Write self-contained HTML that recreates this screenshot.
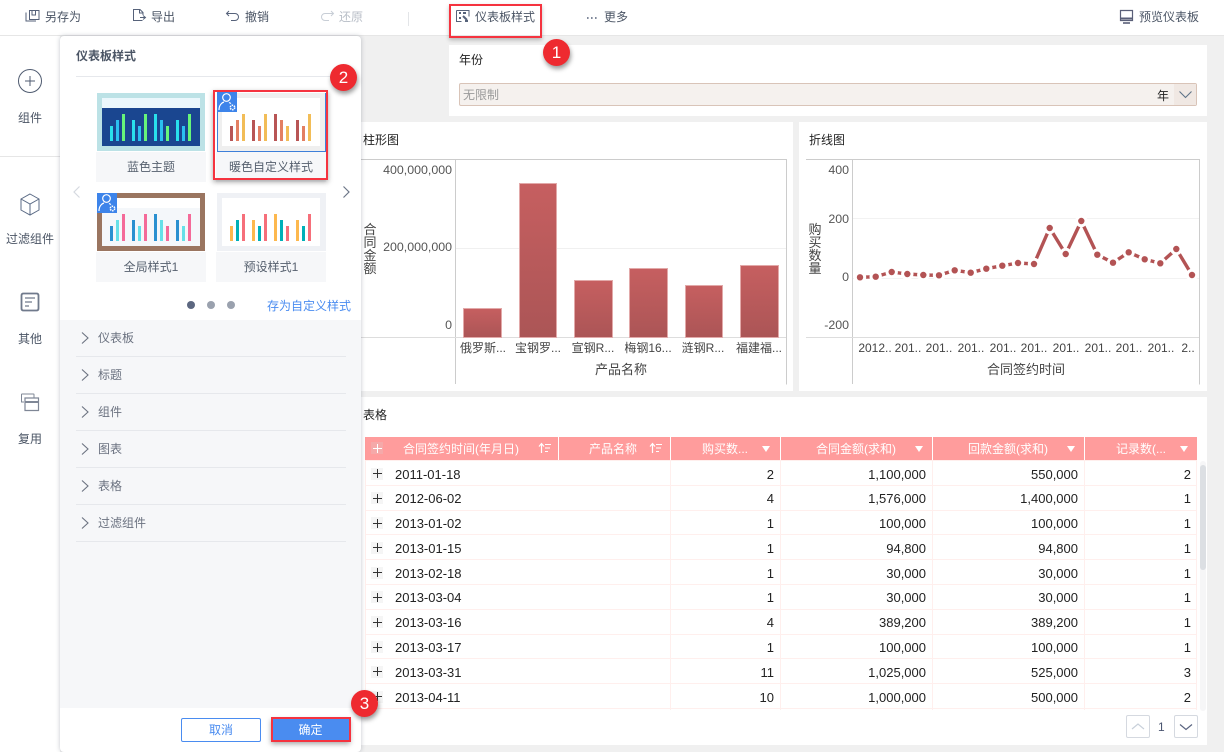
<!DOCTYPE html>
<html lang="zh"><head><meta charset="utf-8"><title>仪表板样式</title>
<style>
*{box-sizing:border-box;margin:0;padding:0}
html,body{width:1224px;height:752px;overflow:hidden;background:#f0f0f0}
body{position:relative;font:12px/16px "Liberation Sans","Noto Sans CJK SC",sans-serif;color:#333}
.a{position:absolute}
.t{position:absolute;white-space:nowrap}
#top{left:0;top:0;width:1224px;height:36px;background:#fff;border-bottom:1px solid #e6e6e6}
#top .t{top:9px;color:#4b5565}
#rail{left:0;top:36px;width:60px;height:716px;background:#fff}
.rl{position:absolute;left:0;width:60px;text-align:center;color:#4b5565}
.pn{background:#fff}
#panel{left:60px;top:36px;width:301px;height:716px;background:#fff;border-radius:4px;box-shadow:0 0 5px rgba(60,70,90,.3);z-index:5;overflow:hidden}
.card{position:absolute;width:110px;height:30px;background:#f6f7f9;text-align:center;line-height:30px;color:#56606e}
.sec{position:absolute;left:16px;width:270px;height:37px;border-bottom:1px solid #e6e8ec;color:#6b7280;padding:10px 0 0 22px}
.sec svg{position:absolute;left:5px;top:12px}
#hdr{left:365px;top:437px;width:832px;height:23px;background:#ff9c9c;color:#fff}
#hdr i{position:absolute;top:0;width:1px;height:23px;background:#fff}
#hdr .t{top:4px}
.tri{position:absolute;top:9px;width:0;height:0;border-left:4.5px solid transparent;border-right:4.5px solid transparent;border-top:6px solid #fff}
#rows{left:365px;top:461px;width:832px;height:249px;overflow:hidden;font-size:13px;color:#222}
.r{position:relative;height:24.8px;border-bottom:1px solid #ffefed}
.r b{font-weight:400;position:absolute;top:5.500px;white-space:nowrap}
.r u{position:absolute;left:6px;top:6.500px;width:12px;height:12px;text-decoration:none;background:linear-gradient(#333,#333) center/9px 1px no-repeat,linear-gradient(#333,#333) center/1px 9px no-repeat,#f5f5f5}
.c1{left:30px}.c3{right:423px}.c4{right:271px}.c5{right:119px}.c6{right:6px}
.cl{position:absolute;top:461px;width:1px;height:249px;background:#ffefed}
.badge{position:absolute;width:20px;height:20px;background:#3d84ea}
.num{position:absolute;width:27px;height:27px;border-radius:50%;background:#ee2a30;color:#fff;font-size:17px;line-height:27px;text-align:center;box-shadow:1px 3px 5px rgba(0,0,0,.4);z-index:9}
.red{position:absolute;border:2px solid #f5333f;z-index:8}
svg{display:block}
svg text{font-family:"Liberation Sans","Noto Sans CJK SC",sans-serif}
</style></head><body>

<div id="top" class="a">
<svg class="a" style="left:0;top:0" width="640" height="36" fill="none" stroke="#56627a" stroke-width="1">
<path d="M29.500 10.500h9.500v9h-9.500zM26 12.500v8.500h10M32 10.500v4.500h3.500v-4.500"/>
<path d="M142.500 20.500h-9v-11h6.500l3 3v2.500M139.500 9.500v3.500h3M140 17.500h5M143 15.500l2.500 2-2.500 2"/>
<path d="M229 11l-2.500 2.500 2.500 2.500M226.500 13.500h8.500a3.200 3.200 0 0 1 0 7h-4"/>
<path stroke="#c8ced6" d="M331 11l2.500 2.500-2.500 2.500M333.500 13.500h-8.500a3.200 3.200 0 0 0 0 7h4"/>
<path stroke="#e3e5e8" d="M408.500 12v14"/>
<path d="M456.500 10.500h12.500v6M456.500 10.500v11h5"/><path stroke-width="2" d="M459 13h2M463 13h3M459 18h2M463 16l4 4M465 21h3"/>
<path stroke-width="1.600" stroke-dasharray="1.600 2.400" d="M587 18h10"/>
</svg>
<svg class="a" style="left:1118px;top:9px" width="18" height="18" fill="none" stroke="#5a5f78" stroke-width="1.200"><path d="M2.500 1.500h12v10h-12z"/><path d="M2.500 9.500h12" stroke-width="2"/><path d="M5 14h7" stroke-width="1.600"/></svg>
<span class="t" style="left:45px">另存为</span>
<span class="t" style="left:151px">导出</span>
<span class="t" style="left:245px">撤销</span>
<span class="t" style="left:339px;color:#b8bec7">还原</span>
<span class="t" style="left:475px">仪表板样式</span>
<span class="t" style="left:604px">更多</span>
<span class="t" style="left:1139px">预览仪表板</span>
</div>

<div id="rail" class="a">
<div class="a" style="left:0;top:120px;width:60px;height:1px;background:#e6e6e6"></div>
<svg class="a" style="left:0;top:0" width="60" height="400" fill="none" stroke="#4f5b70" stroke-width="1">
<circle cx="30" cy="45" r="11.500"/><path d="M30 40v10M25 45h10"/>
<path d="M30 158l9 5v11l-9 5-9-5v-11zM21 163l9 5 9-5M30 168v11" stroke="#5a6a85"/>
<path d="M21.500 259.500q0-2 2-2h13q2 0 2 2v13q0 2-2 2h-13q-2 0-2-2z" stroke="#707a8c" stroke-width="1.800"/><path d="M25 262h10M25 266h7M25 270h4" stroke-width="1.300" stroke="#707a8c"/>
<path d="M24 366h-2.500v-7.500q0-.5 .5-.5h11.500q.5 0 .5 .5v3" stroke="#7f8796"/><path d="M25 362h13.500v12.500h-13.500z" stroke="#7f8796" stroke-width="1.200"/><path d="M25 366h13.500" stroke="#7f8796" stroke-width="2"/>
</svg>
<div class="rl" style="top:74px">组件</div>
<div class="rl" style="top:195px">过滤组件</div>
<div class="rl" style="top:295px">其他</div>
<div class="rl" style="top:395px">复用</div>
</div>

<!-- 年份 -->
<div class="a pn" style="left:449px;top:45px;width:758px;height:71px"></div>
<span class="t" style="left:459px;top:52px;color:#222">年份</span>
<div class="a" style="left:459px;top:83px;width:738px;height:23px;background:#f5f1ee;border:1px solid #d9c4b8;border-radius:2px"></div>
<div class="a" style="left:1174px;top:84px;width:22px;height:21px;background:#f0e8e3"></div>
<span class="t" style="left:463px;top:87px;color:#9a9a9a">无限制</span>
<span class="t" style="left:1157px;top:88px;color:#222">年</span>
<svg class="a" style="left:1178px;top:90px" width="16" height="10" fill="none" stroke="#5f7488" stroke-width="1.100"><path d="M1.500 1.500l6 6 6-6"/></svg>

<!-- 柱形图 -->
<div class="a pn" style="left:361px;top:122px;width:432px;height:269px"></div>
<div class="a pn" style="left:799px;top:122px;width:408px;height:269px"></div>
<div class="a pn" style="left:361px;top:397px;width:846px;height:348px"></div>

<svg class="a" style="left:361px;top:122px" width="432" height="269">
<defs><linearGradient id="g" x1="0" y1="0" x2="0" y2="1"><stop offset="0" stop-color="#c65f60"/><stop offset="1" stop-color="#ab5556"/></linearGradient></defs>
<path d="M0 37.500h425.500v225M94.500 37v225" fill="none" stroke="#ccc"/>
<path d="M95 126.500h330" stroke="#f0f0f0"/>
<path d="M0 215.500h425" stroke="#ddd"/>
<g fill="url(#g)" stroke="#e2a9a9">
<rect x="102.500" y="186.500" width="38" height="29"/>
<rect x="158.500" y="61.500" width="37" height="154"/>
<rect x="213.500" y="158.500" width="38" height="57"/>
<rect x="268.500" y="146.500" width="38" height="69"/>
<rect x="324.500" y="163.500" width="37" height="52"/>
<rect x="379.500" y="143.500" width="38" height="72"/>
</g>
<g font-size="12.400" fill="#555" text-anchor="end">
<text x="91" y="52">400,000,000</text><text x="91" y="129">200,000,000</text><text x="91" y="207">0</text></g>
<g font-size="12" fill="#444" text-anchor="middle">
<text x="122" y="230">俄罗斯...</text><text x="177" y="230">宝钢罗...</text><text x="232" y="230">宣钢R...</text><text x="287" y="230">梅钢16...</text><text x="342" y="230">涟钢R...</text><text x="398" y="230">福建福...</text></g>
<g font-size="13" fill="#444" text-anchor="middle">
<text x="9" y="112">合</text><text x="9" y="125">同</text><text x="9" y="138">金</text><text x="9" y="151">额</text>
<text x="260" y="252">产品名称</text></g>
</svg>
<span class="t" style="left:363px;top:132px;color:#222">柱形图</span>

<!-- 折线图 -->
<svg class="a" style="left:795px;top:120px" width="412" height="271">
<path d="M11 39.500h393.500v225M57.500 39v225" fill="none" stroke="#ccc"/>
<path d="M58 98.500h346M58 158.500h346" stroke="#f2f2f2"/>
<path d="M11 217.500h393" stroke="#ddd"/>
<polyline fill="none" stroke="#b35354" stroke-width="3.400" points="65,157.300 80.700,156.700 96.700,152 112.300,154 128.300,155 144,155.300 159.700,150.300 175.700,152.700 191.300,148.700 207.300,145.700 223,143 239,144 254.700,108 270.700,134 286.300,101 302.300,134.700 318,142.700 333.700,132.300 349.700,139.300 365.300,143.300 381.300,129 397,155"/>
<g fill="#b35354" stroke="#fff" stroke-width="3">
<circle cx="65" cy="157.300" r="4.700"/><circle cx="80.700" cy="156.700" r="4.700"/><circle cx="96.700" cy="152" r="4.700"/><circle cx="112.300" cy="154" r="4.700"/><circle cx="128.300" cy="155" r="4.700"/><circle cx="144" cy="155.300" r="4.700"/><circle cx="159.700" cy="150.300" r="4.700"/><circle cx="175.700" cy="152.700" r="4.700"/><circle cx="191.300" cy="148.700" r="4.700"/><circle cx="207.300" cy="145.700" r="4.700"/><circle cx="223" cy="143" r="4.700"/><circle cx="239" cy="144" r="4.700"/><circle cx="254.700" cy="108" r="4.700"/><circle cx="270.700" cy="134" r="4.700"/><circle cx="286.300" cy="101" r="4.700"/><circle cx="302.300" cy="134.700" r="4.700"/><circle cx="318" cy="142.700" r="4.700"/><circle cx="333.700" cy="132.300" r="4.700"/><circle cx="349.700" cy="139.300" r="4.700"/><circle cx="365.300" cy="143.300" r="4.700"/><circle cx="381.300" cy="129" r="4.700"/><circle cx="397" cy="155" r="4.700"/>
</g>
<g font-size="12.400" fill="#555" text-anchor="end"><text x="54" y="54">400</text><text x="54" y="103">200</text><text x="54" y="161">0</text><text x="54" y="209">-200</text></g>
<g font-size="12" fill="#444" text-anchor="middle">
<text x="80" y="232">2012..</text><text x="113" y="232">201..</text><text x="144" y="232">201..</text><text x="176" y="232">201..</text><text x="208" y="232">201..</text><text x="239" y="232">201..</text><text x="271" y="232">201..</text><text x="303" y="232">201..</text><text x="334" y="232">201..</text><text x="366" y="232">201..</text><text x="393" y="232">2..</text></g>
<g font-size="13" fill="#444" text-anchor="middle">
<text x="20" y="114">购</text><text x="20" y="127">买</text><text x="20" y="140">数</text><text x="20" y="153">量</text>
<text x="231" y="254">合同签约时间</text></g>
</svg>
<span class="t" style="left:809px;top:132px;color:#222">折线图</span>

<!-- 表格 -->
<span class="t" style="left:363px;top:407px;color:#222">表格</span>
<div id="hdr" class="a">
<div class="a" style="left:6px;top:5px;width:12px;height:12px;background:linear-gradient(#fff,#fff) center/9px 1px no-repeat,linear-gradient(#fff,#fff) center/1px 9px no-repeat,#f5a9a9"></div>
<i style="left:193px"></i><i style="left:305px"></i><i style="left:415px"></i><i style="left:567px"></i><i style="left:719px"></i>
<span class="t" style="left:38px">合同签约时间(年月日)</span>
<span class="t" style="left:224px">产品名称</span>
<span class="t" style="left:337px">购买数...</span>
<span class="t" style="left:451px">合同金额(求和)</span>
<span class="t" style="left:603px">回款金额(求和)</span>
<span class="t" style="left:751px">记录数(...</span>
<svg class="a" style="left:173px;top:5px" width="14" height="12" fill="none" stroke="#fff"><path d="M3.500 11V2M1 4.500l2.500-3 2.500 3" stroke-width="1.200"/><path d="M7 2.500h6M7 6h5M7 9.500h3"/></svg>
<svg class="a" style="left:284px;top:5px" width="14" height="12" fill="none" stroke="#fff"><path d="M3.500 11V2M1 4.500l2.500-3 2.500 3" stroke-width="1.200"/><path d="M7 2.500h6M7 6h5M7 9.500h3"/></svg>
<div class="tri" style="left:397px"></div><div class="tri" style="left:550px"></div><div class="tri" style="left:702px"></div><div class="tri" style="left:815px"></div>
</div>
<div class="a" style="left:365px;top:460px;width:832px;height:1px;background:#ffefed"></div>
<div id="rows" class="a">
<div class="r"><u></u><b class="c1">2011-01-18</b><b class="c3">2</b><b class="c4">1,100,000</b><b class="c5">550,000</b><b class="c6">2</b></div>
<div class="r"><u></u><b class="c1">2012-06-02</b><b class="c3">4</b><b class="c4">1,576,000</b><b class="c5">1,400,000</b><b class="c6">1</b></div>
<div class="r"><u></u><b class="c1">2013-01-02</b><b class="c3">1</b><b class="c4">100,000</b><b class="c5">100,000</b><b class="c6">1</b></div>
<div class="r"><u></u><b class="c1">2013-01-15</b><b class="c3">1</b><b class="c4">94,800</b><b class="c5">94,800</b><b class="c6">1</b></div>
<div class="r"><u></u><b class="c1">2013-02-18</b><b class="c3">1</b><b class="c4">30,000</b><b class="c5">30,000</b><b class="c6">1</b></div>
<div class="r"><u></u><b class="c1">2013-03-04</b><b class="c3">1</b><b class="c4">30,000</b><b class="c5">30,000</b><b class="c6">1</b></div>
<div class="r"><u></u><b class="c1">2013-03-16</b><b class="c3">4</b><b class="c4">389,200</b><b class="c5">389,200</b><b class="c6">1</b></div>
<div class="r"><u></u><b class="c1">2013-03-17</b><b class="c3">1</b><b class="c4">100,000</b><b class="c5">100,000</b><b class="c6">1</b></div>
<div class="r"><u></u><b class="c1">2013-03-31</b><b class="c3">11</b><b class="c4">1,025,000</b><b class="c5">525,000</b><b class="c6">3</b></div>
<div class="r"><u></u><b class="c1">2013-04-11</b><b class="c3">10</b><b class="c4">1,000,000</b><b class="c5">500,000</b><b class="c6">2</b></div>
</div>
<div class="cl" style="left:365px"></div><div class="cl" style="left:670px"></div><div class="cl" style="left:780px"></div><div class="cl" style="left:932px"></div><div class="cl" style="left:1084px"></div><div class="cl" style="left:1196px"></div>
<div class="a" style="left:1200px;top:461px;width:6px;height:250px;background:#f6f6f7;border-radius:3px"></div>
<div class="a" style="left:1200px;top:465px;width:6px;height:105px;background:#dcdfe3;border-radius:3px"></div>
<div class="a" style="left:1126px;top:715px;width:24px;height:23px;border:1px solid #d5d9e0;border-radius:2px"></div>
<div class="a" style="left:1174px;top:715px;width:24px;height:23px;border:1px solid #d5d9e0;border-radius:2px"></div>
<svg class="a" style="left:1126px;top:715px" width="72" height="23" fill="none"><path d="M6 14l6-5 6 5" stroke="#c8d0da" stroke-width="1.200"/><path d="M54 9.500l6 5 6-5" stroke="#5a6480" stroke-width="1.200"/></svg>
<span class="t" style="left:1158px;top:719px;color:#4a5570">1</span>

<!-- panel -->
<div id="panel" class="a">
<div class="t" style="left:16px;top:12px;font-weight:700;color:#4b5565">仪表板样式</div>
<div class="a" style="left:16px;top:40px;width:270px;height:1px;background:#e6e8ec"></div>

<div class="card" style="left:36px;top:116px">蓝色主题</div>
<div class="card" style="left:156px;top:116px">暖色自定义样式</div>
<div class="card" style="left:36px;top:216px">全局样式1</div>
<div class="card" style="left:156px;top:216px">预设样式1</div>

<svg class="a" style="left:37px;top:57px" width="229" height="158">
<!-- blue -->
<rect width="108" height="58" fill="#bce2e6"/><rect x="5" y="5" width="98" height="10" fill="#ebf7fc"/><rect x="5" y="15" width="98" height="38" fill="#1a4690"/>
<g fill="#29e0ec"><rect x="13" y="33" width="3" height="15"/><rect x="35" y="27" width="3" height="21"/><rect x="57" y="21" width="3" height="27"/><rect x="79" y="27" width="3" height="21"/></g>
<g fill="#2bc0f0"><rect x="19" y="27" width="3" height="21"/><rect x="41" y="33" width="3" height="15"/><rect x="63" y="27" width="3" height="21"/><rect x="85" y="33" width="3" height="15"/></g>
<g fill="#66f57a"><rect x="25" y="21" width="3" height="27"/><rect x="47" y="21" width="3" height="27"/><rect x="69" y="33" width="3" height="15"/><rect x="91" y="21" width="3" height="27"/></g>
<!-- warm -->
<g transform="translate(120 0)">
<rect width="109" height="58" fill="#efefef"/><rect x="5" y="5" width="98" height="48" fill="#fff"/>
<g fill="#b85555"><rect x="13" y="33" width="3" height="15"/><rect x="35" y="27" width="3" height="21"/><rect x="57" y="21" width="3" height="27"/><rect x="79" y="27" width="3" height="21"/></g>
<g fill="#e37f62"><rect x="19" y="27" width="3" height="21"/><rect x="41" y="33" width="3" height="15"/><rect x="63" y="27" width="3" height="21"/><rect x="85" y="33" width="3" height="15"/></g>
<g fill="#f2bd57"><rect x="25" y="21" width="3" height="27"/><rect x="47" y="21" width="3" height="27"/><rect x="69" y="33" width="3" height="15"/><rect x="91" y="21" width="3" height="27"/></g>
<rect x=".5" y="-.5" width="108" height="59" fill="none" stroke="#3d7fd9"/>
</g>
<!-- brown -->
<g transform="translate(0 100)">
<rect width="108" height="58" fill="#9a7560"/><rect x="5" y="5" width="98" height="10" fill="#fff"/><rect x="5" y="15" width="98" height="38" fill="#f4f7fa"/>
<g fill="#2a90d0"><rect x="13" y="33" width="3" height="15"/><rect x="35" y="27" width="3" height="21"/><rect x="57" y="21" width="3" height="27"/><rect x="79" y="27" width="3" height="21"/></g>
<g fill="#65e0e8"><rect x="19" y="27" width="3" height="21"/><rect x="41" y="33" width="3" height="15"/><rect x="63" y="27" width="3" height="21"/><rect x="85" y="33" width="3" height="15"/></g>
<g fill="#f46a99"><rect x="25" y="21" width="3" height="27"/><rect x="47" y="21" width="3" height="27"/><rect x="69" y="33" width="3" height="15"/><rect x="91" y="21" width="3" height="27"/></g>
</g>
<!-- preset -->
<g transform="translate(120 100)">
<rect width="109" height="58" fill="#eff1f5"/><rect x="5" y="5" width="98" height="48" fill="#fff"/>
<g fill="#fdb84e"><rect x="13" y="33" width="3" height="15"/><rect x="35" y="27" width="3" height="21"/><rect x="57" y="21" width="3" height="27"/><rect x="79" y="27" width="3" height="21"/></g>
<g fill="#00b0b8"><rect x="19" y="27" width="3" height="21"/><rect x="41" y="33" width="3" height="15"/><rect x="63" y="27" width="3" height="21"/><rect x="85" y="33" width="3" height="15"/></g>
<g fill="#f66f7a"><rect x="25" y="21" width="3" height="27"/><rect x="47" y="21" width="3" height="27"/><rect x="69" y="33" width="3" height="15"/><rect x="91" y="21" width="3" height="27"/></g>
</g>
</svg>

<div class="badge" style="left:157px;top:56px"><svg width="20" height="20" fill="none" stroke="#fff"><circle cx="9.500" cy="5.500" r="3.800" stroke-width="1.200"/><path d="M2 18c0-5 3-7.500 5-8M12 10.500l2 1" stroke-width="1.200"/><circle cx="15.500" cy="15.500" r="2.200" stroke-width="1.500" stroke-dasharray="1.500 .8"/></svg></div>
<div class="badge" style="left:37px;top:157px"><svg width="20" height="20" fill="none" stroke="#fff"><circle cx="9.500" cy="5.500" r="3.800" stroke-width="1.200"/><path d="M2 18c0-5 3-7.500 5-8M12 10.500l2 1" stroke-width="1.200"/><circle cx="15.500" cy="15.500" r="2.200" stroke-width="1.500" stroke-dasharray="1.500 .8"/></svg></div>

<svg class="a" style="left:10px;top:150px" width="285" height="12" fill="none"><path d="M9.500 .5l-5.500 5.500 5.500 5.500" stroke="#d5d9e0" stroke-width="1.200"/><path d="M273.500 .5l5.500 5.500-5.500 5.500" stroke="#6d7688" stroke-width="1.200"/></svg>
<svg class="a" style="left:120px;top:262px" width="60" height="14"><circle cx="11" cy="7" r="4" fill="#5c6780"/><circle cx="31" cy="7" r="4" fill="#9aa1ae"/><circle cx="51" cy="7" r="4" fill="#9aa1ae"/></svg>
<span class="t" style="left:207px;top:262px;color:#4a8cf0">存为自定义样式</span>

<div class="a" style="left:0;top:284px;width:301px;height:388px;background:#f6f7f9"></div>
<div class="sec" style="top:284px"><svg width="8" height="12" fill="none" stroke="#6b7280" stroke-width="1.100"><path d="M1 .5l6 5.500-6 5.500"/></svg>仪表板</div>
<div class="sec" style="top:321px"><svg width="8" height="12" fill="none" stroke="#6b7280" stroke-width="1.100"><path d="M1 .5l6 5.500-6 5.500"/></svg>标题</div>
<div class="sec" style="top:358px"><svg width="8" height="12" fill="none" stroke="#6b7280" stroke-width="1.100"><path d="M1 .5l6 5.500-6 5.500"/></svg>组件</div>
<div class="sec" style="top:395px"><svg width="8" height="12" fill="none" stroke="#6b7280" stroke-width="1.100"><path d="M1 .5l6 5.500-6 5.500"/></svg>图表</div>
<div class="sec" style="top:432px"><svg width="8" height="12" fill="none" stroke="#6b7280" stroke-width="1.100"><path d="M1 .5l6 5.500-6 5.500"/></svg>表格</div>
<div class="sec" style="top:469px"><svg width="8" height="12" fill="none" stroke="#6b7280" stroke-width="1.100"><path d="M1 .5l6 5.500-6 5.500"/></svg>过滤组件</div>

<div class="a" style="left:121px;top:682px;width:80px;height:24px;border:1px solid #4a8cf0;border-radius:2px;color:#4a8cf0;text-align:center;line-height:22px">取消</div>
<div class="a" style="left:211px;top:682px;width:79px;height:24px;background:#4a8cf0;color:#fff;text-align:center;line-height:24px;box-shadow:0 2px 5px rgba(0,0,0,.35)">确定</div>
</div>

<div class="red" style="left:449px;top:4px;width:93px;height:34px;box-shadow:0 2px 4px rgba(0,0,0,.25)"></div>
<div class="red" style="left:213px;top:90px;width:115px;height:90px;box-shadow:0 2px 5px rgba(0,0,0,.35)"></div>
<div class="red" style="left:271px;top:717px;width:80px;height:25px"></div>
<div class="num" style="left:543px;top:39px">1</div>
<div class="num" style="left:330px;top:64px">2</div>
<div class="num" style="left:351px;top:690px">3</div>
</body></html>
